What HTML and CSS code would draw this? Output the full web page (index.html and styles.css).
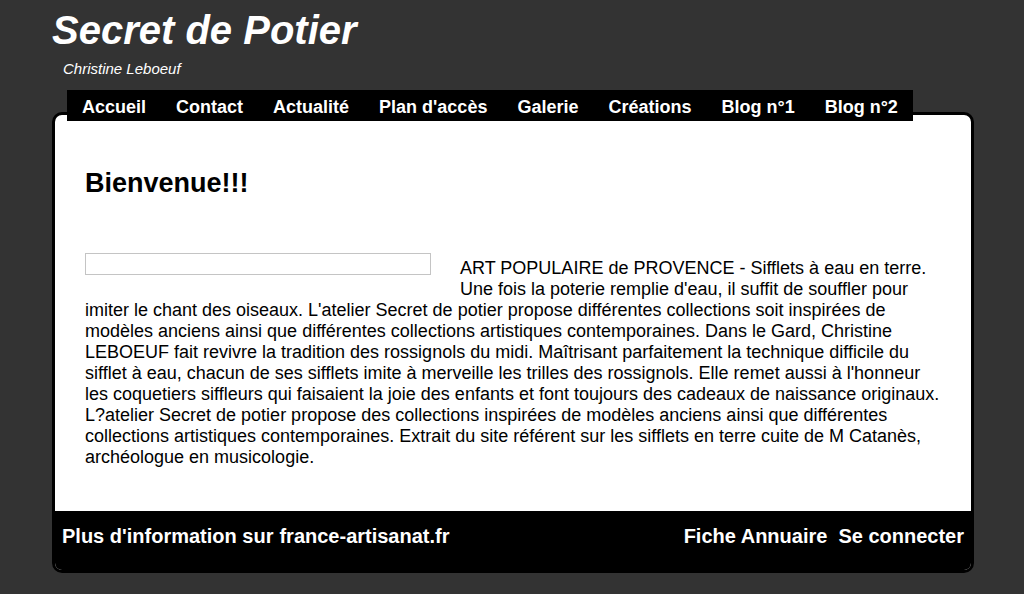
FILE: index.html
```html
<!DOCTYPE html>
<html lang="fr">
<head>
    <meta charset="UTF-8">
    <title>Secret de Potier</title>
    <link rel="stylesheet" href="styles.css">
</head>
<body>
    <div class="page">
        <div class="header">
            <h1 class="site-title">Secret de Potier</h1>
            <div class="site-subtitle">Christine Leboeuf</div>
        </div>

        <div class="navbar">
            <a href="#">Accueil</a>
            <a href="#">Contact</a>
            <a href="#">Actualité</a>
            <a href="#">Plan d'accès</a>
            <a href="#">Galerie</a>
            <a href="#">Créations</a>
            <a href="#">Blog n°1</a>
            <a href="#">Blog n°2</a>
        </div>

        <div class="panel">
            <div class="content">
                <h2>Bienvenue!!!</h2>
                <div class="intro">
                    <div class="photo"></div>
                    <p>ART POPULAIRE de PROVENCE - Sifflets à eau en terre. Une fois la poterie remplie d'eau, il suffit de souffler pour imiter le chant des oiseaux. L'atelier Secret de potier propose différentes collections soit inspirées de modèles anciens ainsi que différentes collections artistiques contemporaines. Dans le Gard, Christine LEBOEUF fait revivre la tradition des rossignols du midi. Maîtrisant parfaitement la technique difficile du sifflet à eau, chacun de ses sifflets imite à merveille les trilles des rossignols. Elle remet aussi à l'honneur les coquetiers siffleurs qui faisaient la joie des enfants et font toujours des cadeaux de naissance originaux. L?atelier Secret de potier propose des collections inspirées de modèles anciens ainsi que différentes collections artistiques contemporaines. Extrait du site référent sur les sifflets en terre cuite de M Catanès, archéologue en musicologie.</p>
                </div>
            </div>

            <div class="footer">
                <div class="footer-left">
                    <a href="#">Plus d'information sur</a>
                    <a href="#">france-artisanat.fr</a>
                </div>
                <div class="footer-right">
                    <a href="#">Fiche Annuaire</a>
                    <a href="#">Se connecter</a>
                </div>
            </div>
        </div>
    </div>
</body>
</html>
```

FILE: styles.css
```css
body {
    margin: 0;
    padding: 0;
    font-family: "Liberation Sans", Arial, sans-serif;
    background: #333333;
    color: #000;
}

.page {
    width: 922px;
    margin-left: 52px;
}

.header {
    padding-top: 7px;
}

.site-title {
    margin: 0;
    font-size: 40px;
    font-weight: bold;
    font-style: italic;
    color: #fff;
    line-height: 46px;
}

.site-subtitle {
    margin-top: 7px;
    padding-left: 11px;
    font-size: 15px;
    font-style: italic;
    color: #fff;
    line-height: 17px;
}

.navbar {
    position: relative;
    z-index: 1;
    display: flex;
    width: fit-content;
    margin: 13px 0 -9px 15px;
    padding: 4px 15px 0 15px;
    background: #000;
    gap: 30px;
}

.navbar a {
    color: #fff;
    text-decoration: none;
    font-size: 18px;
    font-weight: bold;
    line-height: 27px;
}

.panel {
    border: 3px solid #000;
    border-radius: 10px;
    overflow: hidden;
    background: #fff;
}

.content {
    padding: 53px 30px 43px 30px;
}

.content h2 {
    margin: 0 0 54px 0;
    font-size: 27px;
    line-height: 31px;
}

.intro {
    overflow: hidden;
}

.photo {
    float: left;
    width: 344px;
    height: 20px;
    margin: 0 29px 12px 0;
    border: 1px solid #c4c4c4;
}

.intro p {
    margin: 0;
    padding-top: 5px;
    font-size: 18px;
    line-height: 21px;
}

.footer {
    display: flex;
    justify-content: space-between;
    padding: 14px 7px 22px 7px;
    background: #000;
}

.footer-left, .footer-right {
    display: flex;
}

.footer-left {
    gap: 6px;
}

.footer-right {
    gap: 11px;
}

.footer a {
    color: #fff;
    text-decoration: none;
    font-size: 20px;
    font-weight: bold;
    line-height: 23px;
}
```
